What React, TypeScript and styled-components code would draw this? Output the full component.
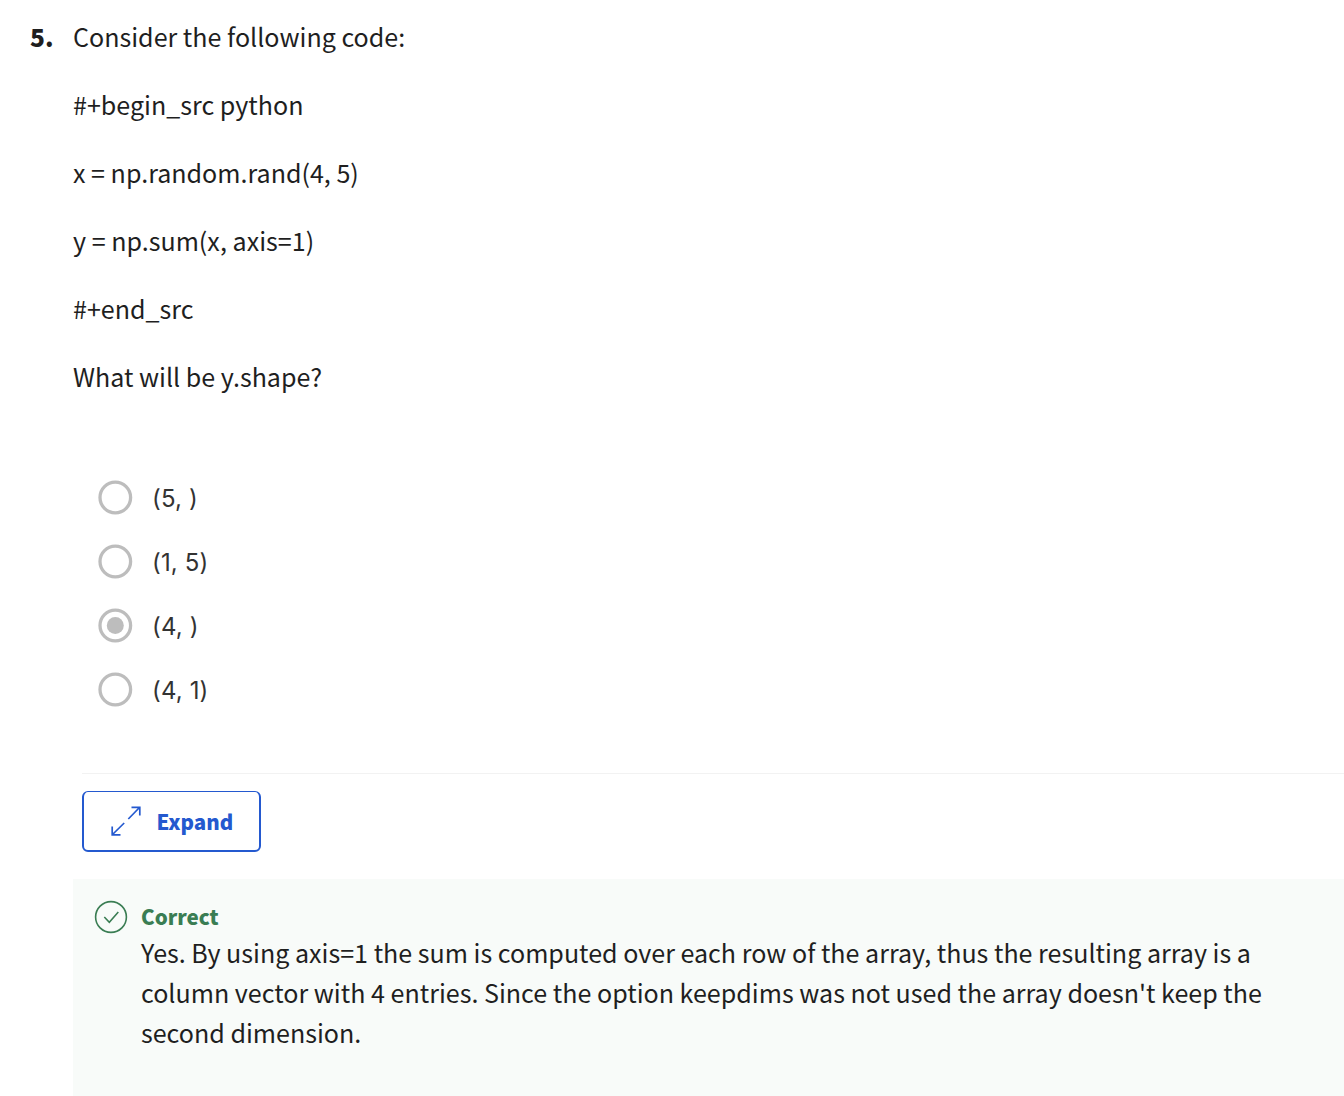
import React from 'react';
import styled, { createGlobalStyle } from 'styled-components';

const sans = '"Noto Sans CJK SC", "Noto Sans", sans-serif';

const Global = createGlobalStyle`
  body { margin: 0; background: #fff; overflow: hidden; }
  * { box-sizing: border-box; }
`;
const Page = styled.main`
  width: 1344px;
  height: 1096px;
  overflow: hidden;
  display: flex;
  font-family: ${sans};
  color: #1f1f1f;
`;
const Num = styled.div`
  width: 73px;
  flex: none;
  padding: 17px 0 0 30px;
  font-size: 24.5px;
  line-height: 40px;
  font-weight: 900;
`;
const Content = styled.div`
  flex: 1;
  display: flex;
  flex-direction: column;
`;
const Prompt = styled.div`
  padding-top: 16px;
  display: flex;
  flex-direction: column;
  gap: 28px;
`;
const Line = styled.p`
  margin: 0;
  font-size: 25.07px;
  line-height: 40px;
  white-space: nowrap;
`;
const Options = styled.div`
  display: flex;
  flex-direction: column;
  gap: 30px;
  padding: 84px 0 0 25px;
`;
const Option = styled.label`
  display: flex;
  align-items: center;
  gap: 19px;
  height: 34px;
`;
const Radio = styled.svg`
  width: 35px;
  height: 35px;
  flex: none;
  fill: none;
  stroke: #bdbdbd;
  stroke-width: 3.3;
`;
const Dot = styled.circle`
  fill: #bdbdbd;
  stroke: none;
`;
const OptionText = styled.span`
  padding-top: 4px;
  font: 24px/34px Inter, "Liberation Sans", sans-serif;
  letter-spacing: 0.15px;
  color: #333;
`;
const Divider = styled.hr`
  margin: 67px 0 0 9px;
  border: 0;
  height: 1px;
  flex: none;
  background: #f2f2f2;
`;
const Expand = styled.button`
  margin: 17px 0 0 9px;
  width: 179px;
  height: 61px;
  flex: none;
  border: 2px solid #2459cf;
  border-top-width: 1px;
  border-radius: 6px;
  background: #fff;
  padding: 0 0 0 26px;
  display: flex;
  align-items: center;
  gap: 14.5px;
  color: #2459cf;
`;
const ExpandLabel = styled.span`
  font: 900 20.5px/30px ${sans};
`;
const Feedback = styled.section`
  margin-top: 27px;
  flex: 1;
  background: #f8fbf9;
  padding: 19px 0 0 21px;
  display: flex;
  gap: 13px;
`;
const CheckIcon = styled.svg`
  margin-top: 2px;
  flex: none;
`;
const Title = styled.h4`
  margin: 0;
  padding-top: 1px;
  font-size: 20.5px;
  line-height: 35px;
  height: 34px;
  font-weight: 900;
  color: #3a7d53;
`;

const prompt = [
  'Consider the following code:',
  '#+begin_src python',
  'x = np.random.rand(4, 5)',
  'y = np.sum(x, axis=1)',
  '#+end_src',
  'What will be y.shape?',
];
const options = ['(5, )', '(1, 5)', '(4, )', '(4, 1)'];

export default function App() {
  return (
    <Page>
      <Global />
      <Num>5.</Num>
      <Content>
        <Prompt>
          {prompt.map((t) => (
            <Line key={t}>{t}</Line>
          ))}
        </Prompt>
        <Options>
          {options.map((t, i) => (
            <Option key={t}>
              <Radio viewBox="0 0 35 35">
                <circle cx="17.3" cy="17.5" r="15.3" />
                {i === 2 && <Dot cx="17.3" cy="17.5" r="8.5" />}
              </Radio>
              <OptionText>{t}</OptionText>
            </Option>
          ))}
        </Options>
        <Divider />
        <Expand>
          <svg width="32" height="32" viewBox="0 0 32 32" fill="none" stroke="#2459cf" strokeWidth="1.7">
            <path d="M21.500 2.300h8.300v8.300M29.500 2.500L18.300 14M2.200 21.500v8.300h8.300M2.500 29.500L14.200 18" />
          </svg>
          <ExpandLabel>Expand</ExpandLabel>
        </Expand>
        <Feedback>
          <CheckIcon width="34" height="34" viewBox="0 0 34 34" fill="none" stroke="#3a7d53" strokeWidth="1.6">
            <circle cx="17" cy="17" r="15.400" />
            <path d="M10.300 17l5 5.200 9-10.200" />
          </CheckIcon>
          <div>
            <Title>Correct</Title>
            <Line>Yes. By using axis=1 the sum is computed over each row of the array, thus the resulting array is a</Line>
            <Line>column vector with 4 entries. Since the option keepdims was not used the array doesn't keep the</Line>
            <Line>second dimension.</Line>
          </div>
        </Feedback>
      </Content>
    </Page>
  );
}
